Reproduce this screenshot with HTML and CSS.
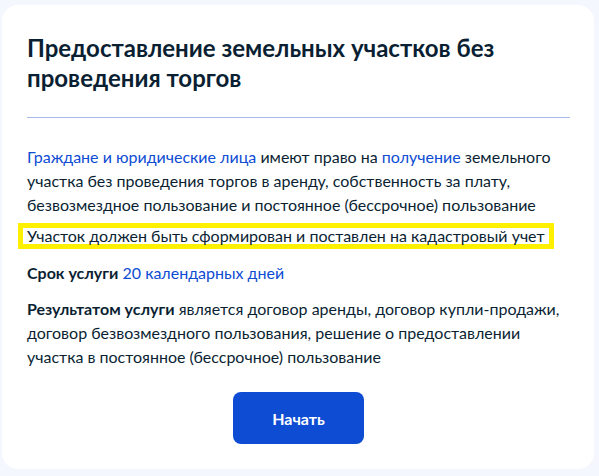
FILE: index.html
```html
<!DOCTYPE html>
<html lang="ru">
<head>
    <meta charset="UTF-8">
    <title>Предоставление земельных участков без проведения торгов</title>
    <link rel="stylesheet" href="styles.css">
</head>
<body>
    <div class="card">
        <h1 class="title">Предоставление земельных участков без проведения торгов</h1>
        <div class="divider"></div>
        <p class="text"><a href="#">Граждане и юридические лица</a> имеют право на <a href="#">получение</a> земельного участка без проведения торгов в аренду, собственность за плату, безвозмездное пользование и постоянное (бессрочное) пользование</p>
        <p class="mark">Участок должен быть сформирован и поставлен на кадастровый учет</p>
        <p class="text"><b>Срок услуги</b> <a href="#">20 календарных дней</a></p>
        <p class="text"><b>Результатом услуги</b> является договор аренды, договор купли-продажи, договор безвозмездного пользования, решение о предоставлении участка в постоянное (бессрочное) пользование</p>
        <div class="actions">
            <button class="btn">Начать</button>
        </div>
    </div>
</body>
</html>
```

FILE: styles.css
```css
*{
    margin:0;
    padding:0;
    box-sizing:border-box;
}
body{
    background:#f4f7fd;
    font-family:Lato, "Noto Sans", sans-serif;
    color:#0b1f33;
    padding:5px 5px 0 2px;
}
.card{
    width:592px;
    height:464px;
    background:#fff;
    border-radius:16px;
    padding:28px 24px 0 25px;
}
.title{
    font-size:24px;
    line-height:30px;
    font-weight:700;
}
.divider{
    height:1px;
    background:#a4b9e7;
    margin:24px 0 27px;
}
.text{
    font-size:16px;
    line-height:24px;
    margin-bottom:12px;
}
.text:first-of-type{
    margin-bottom:6px;
}
.text a{
    color:#0d4cd3;
    text-decoration:none;
}
.text b{
    font-weight:700;
}
.mark{
    width:fit-content;
    border:5px solid #fff000;
    padding:0 4px;
    margin:0 0 12px -9px;
    font-size:16px;
    line-height:16px;
}
.actions{
    display:flex;
    justify-content:center;
    padding-top:11px;
}
.btn{
    width:131px;
    height:52px;
    border:0;
    border-radius:8px;
    background:#0d4cd3;
    color:#fff;
    font-family:Lato, "Noto Sans", sans-serif;
    font-size:16px;
    font-weight:700;
    cursor:pointer;
}
```
